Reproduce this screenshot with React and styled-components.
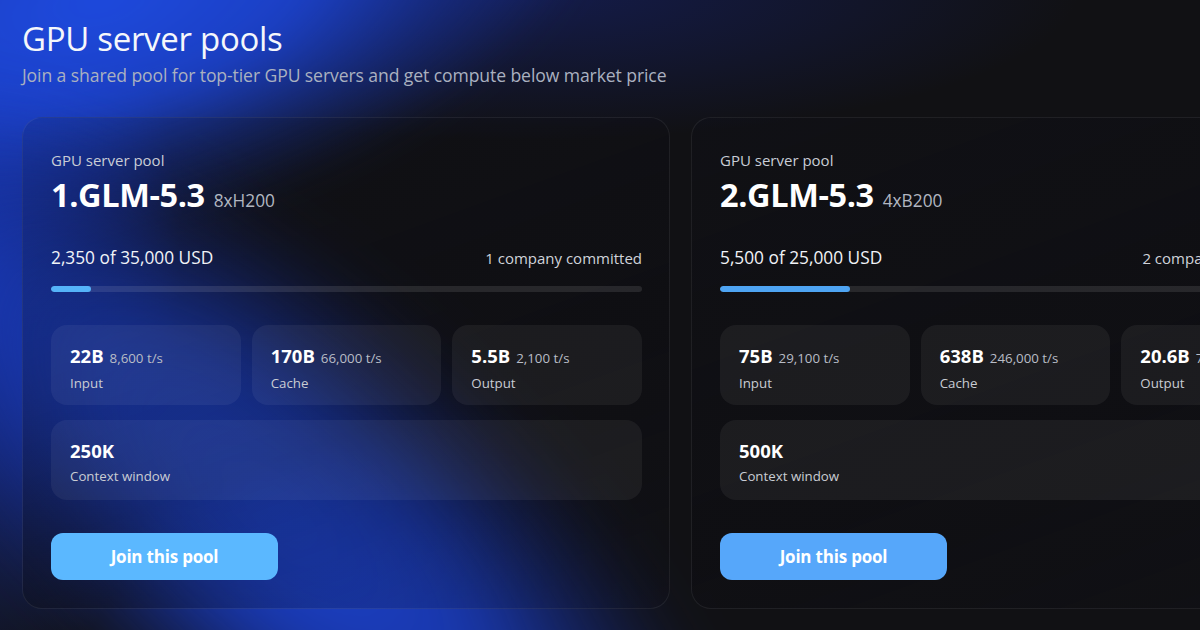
import React from 'react';
import styled, { createGlobalStyle } from 'styled-components';

const GlobalStyle = createGlobalStyle`
  html, body {
    margin: 0;
    padding: 0;
    background: #111114;
  }
  body {
    font-family: "Open Sans", "Noto Sans", Arial, sans-serif;
    color: #f3f5f9;
    -webkit-font-smoothing: antialiased;
  }
  * { box-sizing: border-box; }
`;

const Page = styled.main`
  position: relative;
  width: 1200px;
  height: 630px;
  overflow: hidden;
  padding: 18px 0 0 22px;
  background:
    radial-gradient(ellipse 200px 420px at -20px 280px, rgba(24, 58, 190, 0.85) 0%, rgba(22, 50, 170, 0.4) 55%, rgba(20, 40, 140, 0) 100%),
    radial-gradient(ellipse 560px 150px at 520px -10px, rgba(22, 36, 120, 0.55) 0%, rgba(20, 30, 90, 0) 100%),
    #111114;

  /* glow in the top-left corner behind the heading */
  &::before {
    content: '';
    position: absolute;
    left: -420px;
    top: -240px;
    width: 1040px;
    height: 480px;
    transform: rotate(-14deg);
    background: radial-gradient(ellipse at center, rgba(30, 74, 222, 1) 0%, rgba(28, 68, 212, 0.9) 30%, rgba(24, 56, 180, 0.45) 52%, rgba(20, 40, 140, 0) 70%);
    filter: blur(18px);
    pointer-events: none;
  }

  /* diagonal glow running down to the bottom edge */
  &::after {
    content: '';
    position: absolute;
    left: -330px;
    top: 280px;
    width: 1220px;
    height: 470px;
    transform: rotate(42deg);
    background: radial-gradient(ellipse at center, rgba(28, 66, 205, 1) 0%, rgba(26, 62, 198, 0.85) 28%, rgba(22, 50, 170, 0.4) 50%, rgba(20, 40, 140, 0) 70%);
    filter: blur(30px);
    pointer-events: none;
  }
`;

const Content = styled.div`
  position: relative;
  z-index: 1;
`;

const Heading = styled.h1`
  margin: 0;
  font-size: 33px;
  line-height: 42px;
  font-weight: 400;
  letter-spacing: -0.3px;
  color: #f5f7fb;
`;

const Subheading = styled.p`
  margin: 2px 0 0;
  font-size: 17.6px;
  line-height: 26px;
  color: #aab1c0;
  letter-spacing: -0.1px;
`;

const PoolRow = styled.div`
  display: flex;
  gap: 21px;
  margin-top: 29px;
`;

const Card = styled.section`
  flex: 0 0 648px;
  height: 492px;
  border-radius: 20px;
  border: 1px solid rgba(255, 255, 255, 0.07);
  background: linear-gradient(160deg, rgba(14, 16, 30, 0.12) 0%, rgba(12, 12, 18, 0.32) 60%, rgba(14, 16, 30, 0.1) 100%);
  padding: 32px 27px 28px 28px;
  display: flex;
  flex-direction: column;
`;

const Eyebrow = styled.div`
  font-size: 15px;
  line-height: 20px;
  color: #c9cdd6;
`;

const TitleLine = styled.div`
  display: flex;
  align-items: baseline;
  gap: 9px;
  margin-top: 6px;
`;

const PoolName = styled.span`
  font-size: 32.5px;
  line-height: 38px;
  font-weight: 700;
  letter-spacing: -0.4px;
  color: #ffffff;
`;

const Hardware = styled.span`
  font-size: 17.3px;
  color: #b2b7c1;
`;

const AmountRow = styled.div`
  display: flex;
  justify-content: space-between;
  align-items: baseline;
  margin-top: 33px;
`;

const Amount = styled.span`
  font-size: 17.3px;
  line-height: 22px;
  font-weight: 500;
  color: #f1f3f7;
`;

const Committed = styled.span`
  font-size: 15px;
  line-height: 22px;
  color: #d0d3da;
`;

const Track = styled.div`
  margin-top: 17px;
  height: 6px;
  border-radius: 3px;
  background: rgba(255, 255, 255, 0.1);
  overflow: hidden;
`;

const Fill = styled.div`
  height: 100%;
  border-radius: 3px;
  background: ${p => p.$tone};
`;

const StatGrid = styled.div`
  display: grid;
  grid-template-columns: repeat(3, 1fr);
  gap: 15px 11px;
  margin-top: 33px;
`;

const Stat = styled.div`
  grid-column: ${p => (p.$wide ? '1 / -1' : 'auto')};
  height: 80px;
  border-radius: 16px;
  background: rgba(255, 255, 255, 0.055);
  padding: 19px 16px 0 19px;
  white-space: nowrap;
  overflow: hidden;
`;

const StatValue = styled.div`
  display: flex;
  align-items: baseline;
  gap: 6px;
  line-height: 24px;
`;

const Big = styled.span`
  font-size: 18.5px;
  font-weight: 700;
  color: #ffffff;
`;

const Rate = styled.span`
  font-size: 13.3px;
  color: #b9bdc6;
`;

const StatLabel = styled.div`
  margin-top: 3px;
  font-size: 13.3px;
  line-height: 20px;
  color: #c9ccd3;
`;

const JoinButton = styled.button`
  margin-top: 33px;
  width: 227px;
  height: 47px;
  flex: 0 0 47px;
  border: none;
  border-radius: 12px;
  background: ${p => p.$tone};
  color: #ffffff;
  font-family: inherit;
  font-size: 17px;
  font-weight: 700;
  letter-spacing: -0.2px;
  cursor: pointer;
`;

const pools = [
  {
    name: '1.GLM-5.3',
    hw: '8xH200',
    raised: 2350,
    goal: 35000,
    companies: '1 company committed',
    stats: [
      { value: '22B', rate: '8,600 t/s', label: 'Input' },
      { value: '170B', rate: '66,000 t/s', label: 'Cache' },
      { value: '5.5B', rate: '2,100 t/s', label: 'Output' },
    ],
    context: '250K',
    bar: '#55b3f9',
    button: '#5bb8ff',
  },
  {
    name: '2.GLM-5.3',
    hw: '4xB200',
    raised: 5500,
    goal: 25000,
    companies: '2 companies committed',
    stats: [
      { value: '75B', rate: '29,100 t/s', label: 'Input' },
      { value: '638B', rate: '246,000 t/s', label: 'Cache' },
      { value: '20.6B', rate: '7,900 t/s', label: 'Output' },
    ],
    context: '500K',
    bar: '#4ea4f2',
    button: '#56a7fa',
  },
];

const fmt = n => n.toLocaleString('en-US');

function PoolCard({ pool }) {
  const pct = (pool.raised / pool.goal) * 100;
  return (
    <Card>
      <Eyebrow>GPU server pool</Eyebrow>
      <TitleLine>
        <PoolName>{pool.name}</PoolName>
        <Hardware>{pool.hw}</Hardware>
      </TitleLine>

      <AmountRow>
        <Amount>{fmt(pool.raised)} of {fmt(pool.goal)} USD</Amount>
        <Committed>{pool.companies}</Committed>
      </AmountRow>
      <Track>
        <Fill $tone={pool.bar} style={{ width: `${pct}%` }} />
      </Track>

      <StatGrid>
        {pool.stats.map(s => (
          <Stat key={s.label}>
            <StatValue>
              <Big>{s.value}</Big>
              <Rate>{s.rate}</Rate>
            </StatValue>
            <StatLabel>{s.label}</StatLabel>
          </Stat>
        ))}
        <Stat $wide>
          <StatValue>
            <Big>{pool.context}</Big>
          </StatValue>
          <StatLabel>Context window</StatLabel>
        </Stat>
      </StatGrid>

      <JoinButton $tone={pool.button}>Join this pool</JoinButton>
    </Card>
  );
}

export default function App() {
  return (
    <>
      <GlobalStyle />
      <Page>
        <Content>
          <Heading>GPU server pools</Heading>
          <Subheading>Join a shared pool for top-tier GPU servers and get compute below market price</Subheading>
          <PoolRow>
            {pools.map(p => (
              <PoolCard key={p.name} pool={p} />
            ))}
          </PoolRow>
        </Content>
      </Page>
    </>
  );
}
